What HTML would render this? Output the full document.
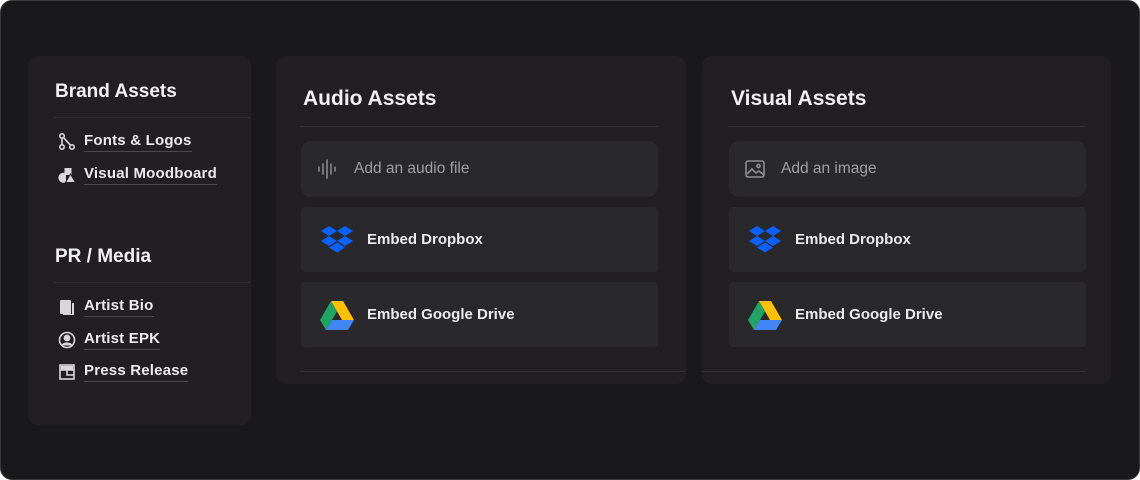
<!DOCTYPE html>
<html><head><style>
*{box-sizing:border-box;margin:0;padding:0}
body{width:1140px;height:480px;background:#fff;font-family:"Liberation Sans",sans-serif;overflow:hidden}
.frame{position:absolute;left:0;top:0;width:1140px;height:480px;background:#19181b;border:1px solid #3a393c;border-radius:12px}
.card{position:absolute;background:#211f23;border-radius:10px}
.abs{position:absolute}
.h{color:#f0eff2;font-weight:bold}
.div{position:absolute;height:1px;background:#303033}
.item{position:absolute;color:#ecebee;font-size:15px;font-weight:bold;display:flex;align-items:center;letter-spacing:0.2px}
.item span{border-bottom:1px solid #4a494d;line-height:20px}
.item svg{width:20px;height:20px;margin-right:7px}
.box{position:absolute;background:#29282b;display:flex;align-items:center}
.add{border-radius:10px;color:#a09fa3;font-size:15.5px}
.emb{border-radius:4px;color:#ecebee;font-size:15px;font-weight:bold}
</style></head><body>
<div class="frame"></div>

<div class="card" style="left:28px;top:56px;width:223px;height:369px"></div>
<div class="abs h" style="left:55px;top:81px;font-size:19px">Brand Assets</div>
<div class="div" style="left:53px;top:117px;width:197px"></div>
<div class="item" style="left:57px;top:131px"><svg viewBox="0 0 20 20" fill="none" stroke="#d8d7da" stroke-width="1.6"><circle cx="5" cy="4" r="2.2"/><circle cx="5" cy="15" r="2.2"/><circle cx="15" cy="15" r="2.2"/><path d="M5 6.2v6.6M6.5 5.6l7 7.6"/></svg><span>Fonts &amp; Logos</span></div>
<div class="item" style="left:57px;top:164px"><svg viewBox="0 0 20 20" fill="#d8d7da"><path d="M9 8.5a5 5 0 1 0 0 8.5z"/><rect x="7.5" y="3" width="7" height="7"/><path d="M13.5 9l5 8.5H8.5z" stroke="#211f23" stroke-width="1"/></svg><span>Visual Moodboard</span></div>

<div class="abs h" style="left:55px;top:246px;font-size:19px">PR / Media</div>
<div class="div" style="left:53px;top:282px;width:197px"></div>
<div class="item" style="left:57px;top:296px"><svg viewBox="0 0 20 20" fill="#d8d7da"><rect x="3" y="3" width="11" height="14" rx="1"/><path d="M15 6h2v12H6v-1h9z"/></svg><span>Artist Bio</span></div>
<div class="item" style="left:57px;top:329px"><svg viewBox="0 0 20 20" fill="none" stroke="#d8d7da" stroke-width="1.6"><circle cx="10" cy="10" r="7.5"/><circle cx="10" cy="8" r="2.6" fill="#d8d7da"/><path d="M5 15.5c2-3 8-3 10 0" fill="#d8d7da"/></svg><span>Artist EPK</span></div>
<div class="item" style="left:57px;top:361px"><svg viewBox="0 0 20 20" fill="none" stroke="#d8d7da" stroke-width="1.6"><rect x="3" y="3" width="14" height="14"/><path d="M3 8h14M10 8v5h7"/><rect x="4" y="4" width="12" height="3.5" fill="#d8d7da" stroke="none"/></svg><span>Press Release</span></div>

<!-- Audio -->
<div class="card" style="left:276px;top:56px;width:410px;height:328px"></div>
<div class="abs h" style="left:303px;top:87px;font-size:21px">Audio Assets</div>
<div class="div" style="left:300px;top:126px;width:358px"></div>
<div class="box add" style="left:301px;top:141px;width:357px;height:56px;padding-left:16px">
<svg width="22" height="22" viewBox="0 0 22 22" stroke="#8e8d91" stroke-width="1.5" stroke-linecap="round"><path d="M2 9v4M6 6v10M10 2v18M14 6v10M18 9v4"/></svg>
<span style="margin-left:15px">Add an audio file</span></div>
<div class="box emb" style="left:301px;top:207px;width:357px;height:65px;padding-left:19px">
<svg width="34" height="34" viewBox="0 0 34 30" fill="#0b61fe"><path d="M9 1l8 5-8 5-8-5zM25 1l8 5-8 5-8-5zM1 16l8-5 8 5-8 5zM33 16l-8-5-8 5 8 5zM9 22.5l8-5 8 5-8 5z"/></svg>
<span style="margin-left:13px">Embed Dropbox</span></div>
<div class="box emb" style="left:301px;top:282px;width:357px;height:65px;padding-left:19px">
<svg width="34" height="30" viewBox="0 0 34 30"><path d="M11 1h12l11 19h-12z" fill="#ffc107"/><path d="M11 1l6 10.5-11 18.5L0 20z" fill="#1fa463"/><path d="M6 30l6-10h22l-6 10z" fill="#4285f4"/></svg>
<span style="margin-left:13px">Embed Google Drive</span></div>
<div class="div" style="left:300px;top:371px;width:386px"></div>

<!-- Visual -->
<div class="card" style="left:702px;top:56px;width:409px;height:328px"></div>
<div class="abs h" style="left:731px;top:87px;font-size:21px">Visual Assets</div>
<div class="div" style="left:728px;top:126px;width:358px"></div>
<div class="box add" style="left:729px;top:141px;width:357px;height:56px;padding-left:15px">
<svg width="22" height="22" viewBox="0 0 22 22" fill="none" stroke="#8e8d91" stroke-width="1.6"><rect x="2" y="3" width="18" height="16" rx="2"/><circle cx="14.5" cy="8" r="1.6"/><path d="M3 16l5-5 4 4 3-2 5 4"/></svg>
<span style="margin-left:15px">Add an image</span></div>
<div class="box emb" style="left:729px;top:207px;width:357px;height:65px;padding-left:19px">
<svg width="34" height="34" viewBox="0 0 34 30" fill="#0b61fe"><path d="M9 1l8 5-8 5-8-5zM25 1l8 5-8 5-8-5zM1 16l8-5 8 5-8 5zM33 16l-8-5-8 5 8 5zM9 22.5l8-5 8 5-8 5z"/></svg>
<span style="margin-left:13px">Embed Dropbox</span></div>
<div class="box emb" style="left:729px;top:282px;width:357px;height:65px;padding-left:19px">
<svg width="34" height="30" viewBox="0 0 34 30"><path d="M11 1h12l11 19h-12z" fill="#ffc107"/><path d="M11 1l6 10.5-11 18.5L0 20z" fill="#1fa463"/><path d="M6 30l6-10h22l-6 10z" fill="#4285f4"/></svg>
<span style="margin-left:13px">Embed Google Drive</span></div>
<div class="div" style="left:702px;top:371px;width:384px"></div>
</body></html>
